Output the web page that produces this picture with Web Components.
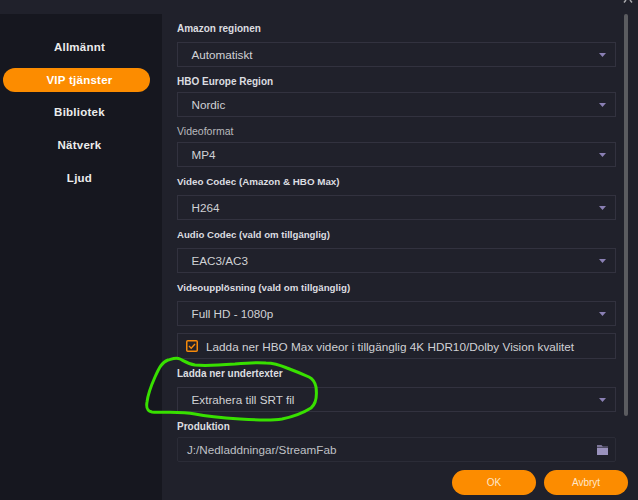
<!DOCTYPE html>
<html><head><meta charset="utf-8">
<style>
html,body{margin:0;padding:0;background:#20212b}
body{width:638px;height:500px;overflow:hidden;font-family:"Liberation Sans",Arial,sans-serif;position:relative}
</style></head><body>
<settings-dialog>
  <nav-item slot="nav">Allmännt</nav-item>
  <nav-item slot="nav" active>VIP tjänster</nav-item>
  <nav-item slot="nav">Bibliotek</nav-item>
  <nav-item slot="nav">Nätverk</nav-item>
  <nav-item slot="nav">Ljud</nav-item>

  <form-field label="Amazon regionen" value="Automatiskt"></form-field>
  <form-field label="HBO Europe Region" value="Nordic" style="--lg:4px"></form-field>
  <form-field label="Videoformat" value="MP4" light style="--lg:4px"></form-field>
  <form-field label="Video Codec (Amazon &amp; HBO Max)" value="H264" style="--fs:9.8px"></form-field>
  <form-field label="Audio Codec (vald om tillgänglig)" value="EAC3/AC3" style="--fs:9.65px"></form-field>
  <form-field label="Videoupplösning (vald om tillgänglig)" value="Full HD - 1080p" style="--fs:9.72px"></form-field>
  <check-row>Ladda ner HBO Max videor i tillgänglig 4K HDR10/Dolby Vision kvalitet</check-row>
  <form-field label="Ladda ner undertexter" value="Extrahera till SRT fil"></form-field>
  <path-field label="Produktion" value="J:/Nedladdningar/StreamFab"></path-field>

  <pill-button slot="actions">OK</pill-button>
  <pill-button slot="actions">Avbryt</pill-button>
</settings-dialog>
<script>
function def(name, css, html){
  customElements.define(name, class extends HTMLElement{
    constructor(){super();const r=this.attachShadow({mode:'open'});
      r.innerHTML='<style>'+css+'</style>'+html;}
    connectedCallback(){
      this.shadowRoot.querySelectorAll('[data-attr]').forEach(e=>{e.textContent=this.getAttribute(e.dataset.attr)||''});
    }
  });
}
const caret='<svg width="7" height="4" viewBox="0 0 7 4"><path d="M0 0h7L3.5 4z" fill="#8a80b4"/></svg>';
const folder='<svg width="11" height="10" viewBox="0 0 11 10"><path d="M0 0h4.5L5.8 1.4H11V2.4H0z" fill="#7d7699"/><path d="M0 3h11V10H0z" fill="#9a92bd"/></svg>';

def('settings-dialog',`
  :host{display:block;position:relative;width:638px;height:500px;background:#20212b;color:#ddd}
  .wrap{display:flex;height:486px;padding-top:14px}
  .side{width:162px;flex:none;background:#16171f;padding:21px 0 0 3px;box-sizing:border-box;display:flex;flex-direction:column}
  .main{flex:1;position:relative;padding:7px 0 0 15px;box-sizing:border-box;display:flex}
  .col{width:439px;display:flex;flex-direction:column}
  .bar{position:absolute;left:462px;top:0;width:4px;height:402px;background:#5b5c60;border-radius:2px}
  .actions{position:absolute;right:10px;bottom:5px;display:flex;gap:8px}
  .topx{position:absolute;left:623px;top:0}
  .scrib{position:absolute;left:0;top:0;pointer-events:none}
`,`<div class="wrap">
    <div class="side"><slot name="nav"></slot></div>
    <div class="main"><div class="col"><slot></slot></div><div class="bar"></div><div class="actions"><slot name="actions"></slot></div></div>
  </div>
  <svg class="topx" width="10" height="3" viewBox="0 0 10 3"><path d="M3 0L1 2.5M7 0L9 2.5" stroke="#a9a9ad" stroke-width="1.5" fill="none"/></svg>
  <svg class="scrib" width="638" height="500" viewBox="0 0 638 500" fill="none"><path d="M180 359C176 357 172 359 168 360C162 362 159 368 155 377C151 386 148 394 147 402C146 408 147 411 152 412C165 413 180 411 195 414C210 417 225 418 240 419C255 420 270 421 282 419C292 417 303 413 311 408C316 404 317 395 316 387C315 382 313 379 309 377C300 373 295 371 287 368C280 365 275 363 266 363C255 362 245 363 235 364C222 365 205 366 195 365C188 364 184 361 180 359Z" stroke="#38e000" stroke-width="3" stroke-linejoin="round"/></svg>`);

def('nav-item',`
  :host{display:flex;align-items:center;justify-content:center;box-sizing:border-box;width:147px;height:24.6px;margin-bottom:8px;padding-left:6px;border-radius:13px;font-weight:700;font-size:11.5px;color:#ececec;letter-spacing:.25px}
  :host([active]){background:#fc8c00;color:#fff}
`,`<slot></slot>`);

def('form-field',`
  :host{display:block}
  .l{font-size:var(--fs,10px);line-height:14px;height:14px;box-sizing:border-box;padding-top:1px;font-weight:700;color:#dcdde0;margin-bottom:var(--lg,7px);white-space:nowrap}
  :host([light]) .l{font-weight:400;font-size:10.5px;color:#b8b9bd;padding-top:0}
  .box{height:25px;box-sizing:border-box;border:1px solid #32323f;margin-bottom:7px;display:flex;align-items:center;justify-content:space-between;padding:0 9px 0 13.5px;font-size:11.7px;color:#d0d1d5}
`,`<div class="l" data-attr="label"></div><div class="box"><span data-attr="value"></span>${caret}</div>`);

def('path-field',`
  :host{display:block}
  .l{font-size:10px;line-height:14px;height:14px;box-sizing:border-box;padding-top:1px;font-weight:700;color:#dcdde0;margin-bottom:4px;white-space:nowrap}
  .box{height:25px;box-sizing:border-box;border:1px solid #2b2c37;border-radius:2px;display:flex;align-items:center;justify-content:space-between;padding:0 7px 0 9px;font-size:11.7px;color:#bfc0c5}
`,`<div class="l" data-attr="label"></div><div class="box"><span data-attr="value"></span>${folder}</div>`);

def('check-row',`
  :host{height:26px;box-sizing:border-box;border:1px solid #32323f;margin-bottom:7px;padding:0 8px;display:flex;align-items:center;gap:8px;font-size:11.75px;color:#d0d1d5;white-space:nowrap}
  svg{flex:none}
`,`<svg width="12" height="12" viewBox="0 0 12 12"><rect x=".75" y=".75" width="10.5" height="10.5" rx="1" fill="none" stroke="#f58a0b" stroke-width="1.5"/><path d="M3 6l2.2 2.2L9 4" fill="none" stroke="#f58a0b" stroke-width="1.4"/></svg><span><slot></slot></span>`);

def('pill-button',`
  :host{display:flex;align-items:center;justify-content:center;width:84px;height:25px;border-radius:12.5px;background:#fc8c00;color:#ffe6c8;font-size:10px}
`,`<slot></slot>`);
</script>
</body></html>
